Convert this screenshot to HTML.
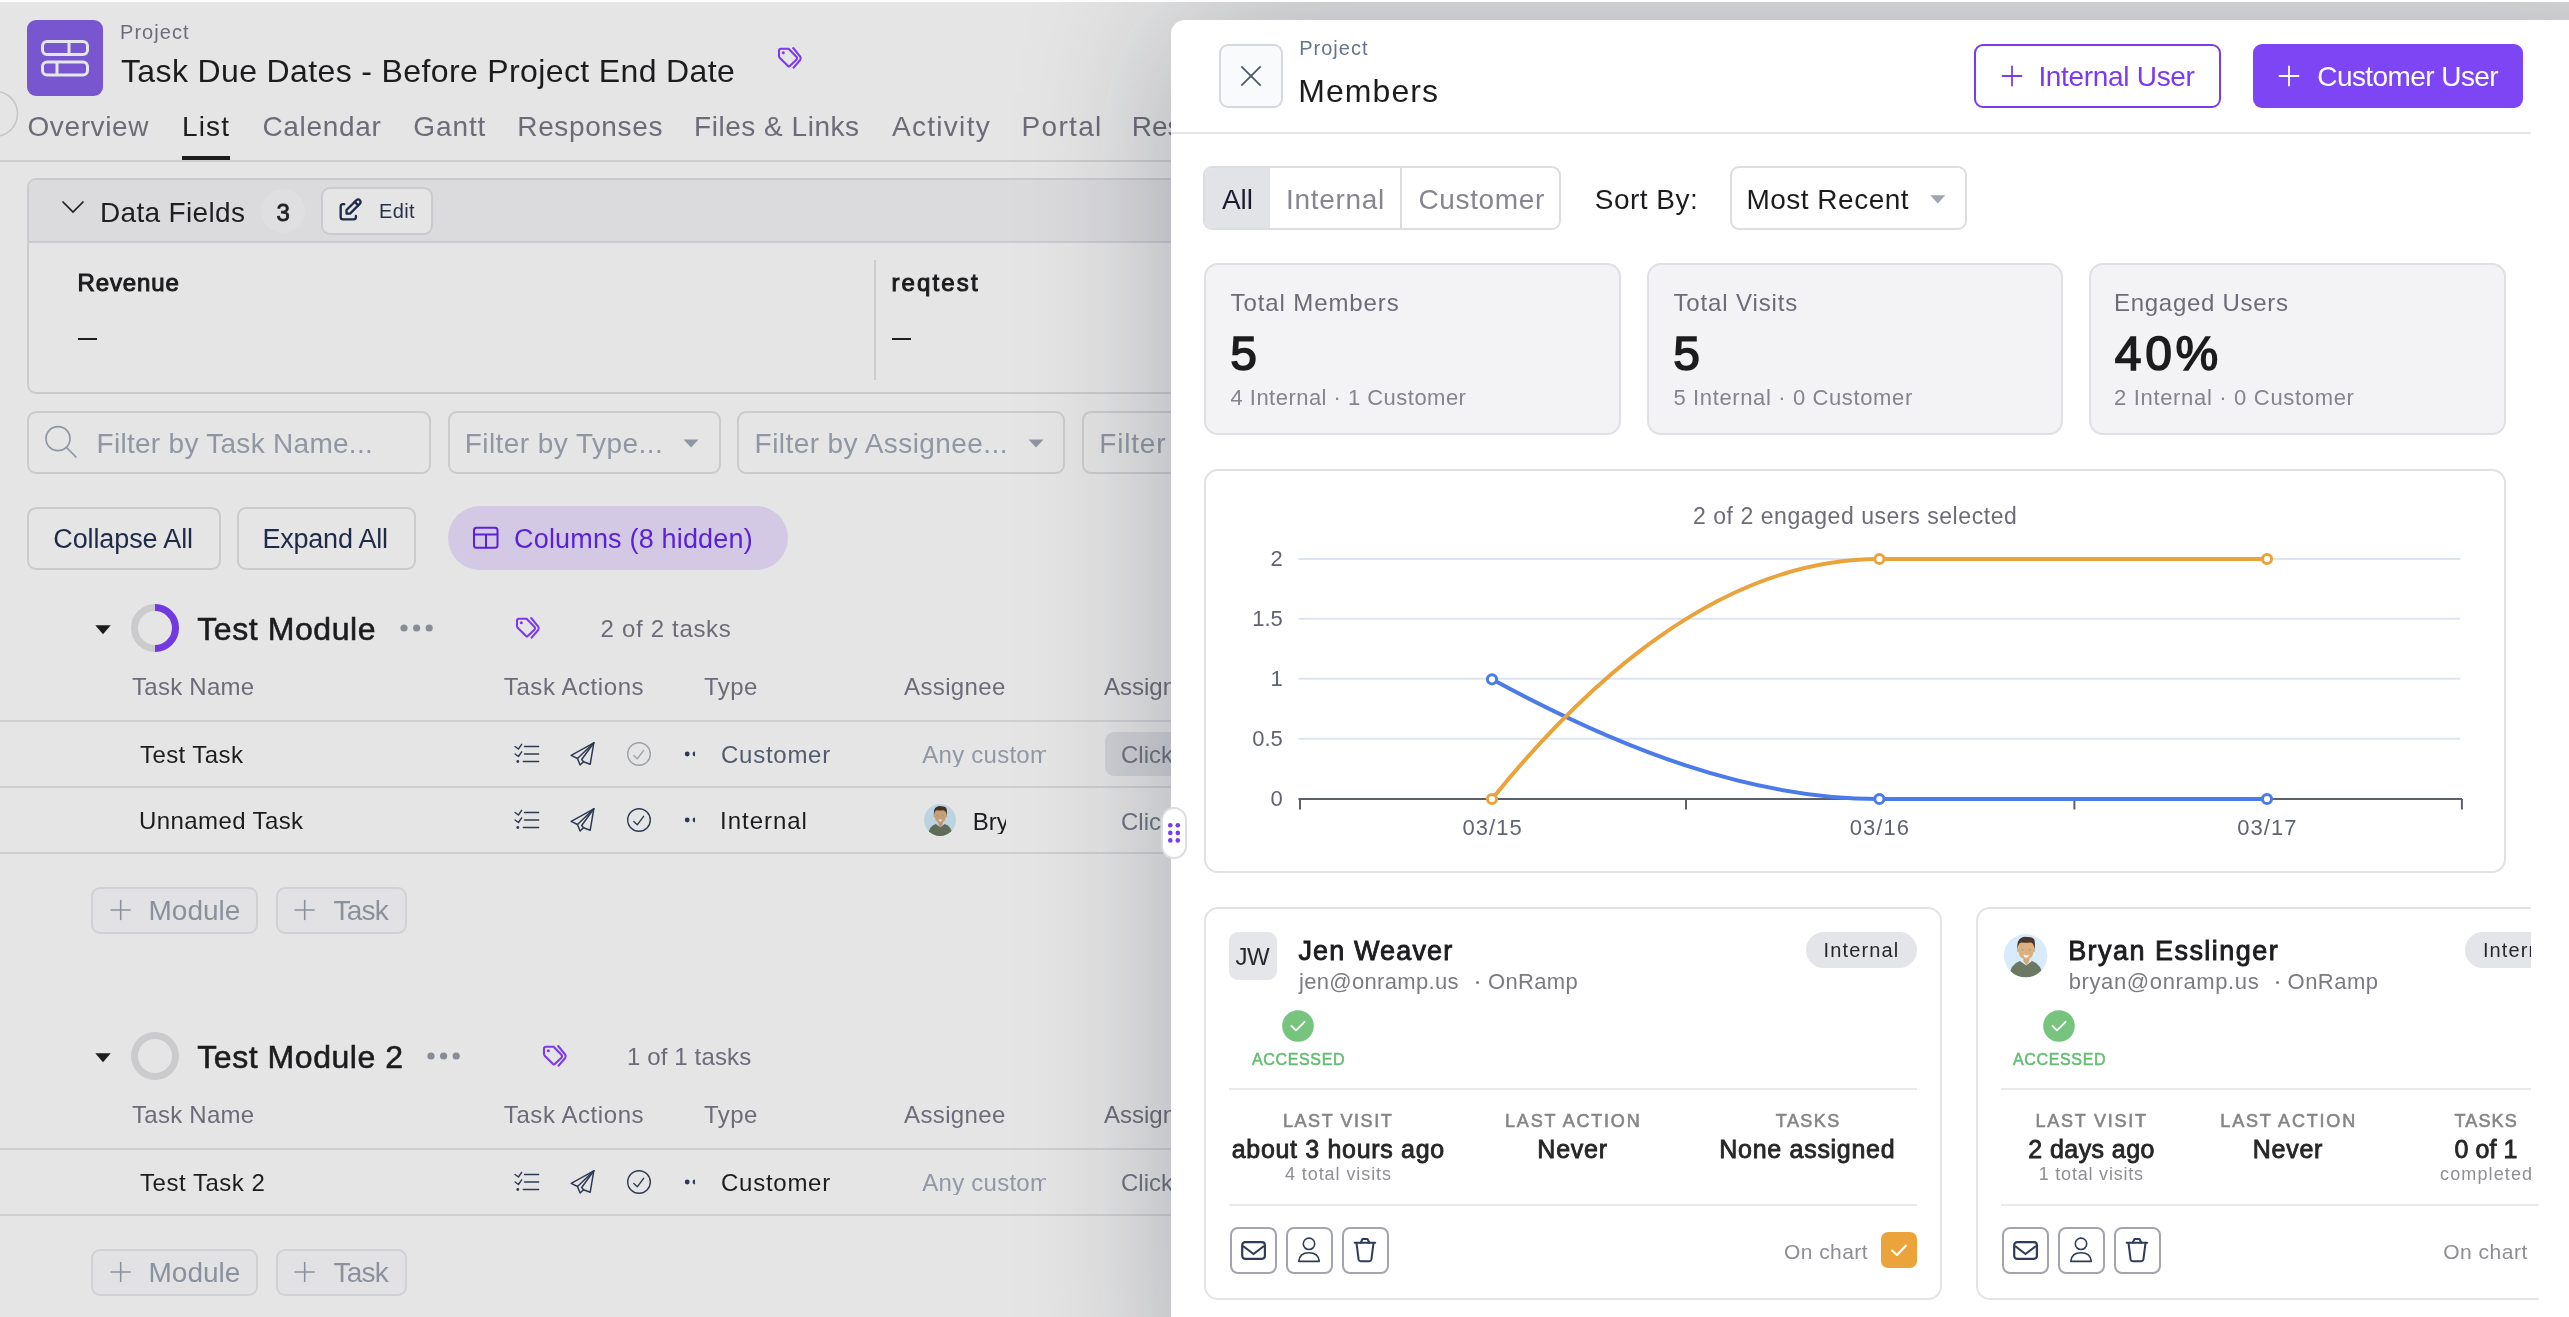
<!DOCTYPE html>
<html><head><meta charset="utf-8"><title>Members</title>
<style>
html,body{margin:0;padding:0;}
body{width:2569px;height:1317px;overflow:hidden;position:relative;background:#e5e5e5;font-family:"Liberation Sans",sans-serif;}
*{-webkit-font-smoothing:antialiased;}

</style></head><body>
<div style="position:absolute;left:0;top:0;width:2569px;height:1317px;overflow:hidden;will-change:transform">
<div style="position:absolute;left:0;top:0;width:1171px;height:1317px;overflow:hidden">
<svg style="position:absolute;left:-30px;top:85px;overflow:visible;" width="60" height="60" viewBox="0 0 60 60" fill="none"><circle cx="25" cy="28.8" r="22.5" stroke="#c6c6c9" stroke-width="1.6"/></svg>
<div style="position:absolute;left:27px;top:20px;width:76px;height:76px;border-radius:9px;background:#7756d0;"></div>
<svg style="position:absolute;left:27px;top:20px;overflow:visible;" width="76" height="76" viewBox="0 0 76 76" fill="none"><rect x="15.5" y="21.5" width="45" height="13" rx="4.5" stroke="#e6e6e6" stroke-width="3"/><rect x="15.5" y="42" width="45" height="13" rx="4.5" stroke="#e6e6e6" stroke-width="3"/><line x1="42" y1="21.5" x2="42" y2="34.5" stroke="#e6e6e6" stroke-width="3"/><line x1="30" y1="42" x2="30" y2="55" stroke="#e6e6e6" stroke-width="3"/></svg>
<div style="position:absolute;left:120.00px;top:22px;font-size:20px;line-height:20px;font-weight:400;color:#6e6c79;letter-spacing:1.052px;white-space:nowrap;">Project</div>
<div style="position:absolute;left:121.00px;top:55px;font-size:32px;line-height:32px;font-weight:400;color:#1c1c1f;letter-spacing:0.369px;white-space:nowrap;">Task Due Dates - Before Project End Date</div>
<svg style="position:absolute;left:770px;top:40px;overflow:visible;" width="40" height="35" viewBox="0 0 40 35" fill="none"><g stroke="#7c3aed" stroke-width="2.1" stroke-linecap="round" stroke-linejoin="round" fill="none"><path d="M11 8.7 H18.6 L26.6 17 Q27.6 18.3 26.6 19.5 L19.8 26.1 Q18.9 27 18 26.1 L9.7 17.7 Q9 17 9 16 V10.7 Q9 8.7 11 8.7 Z"/><path d="M23.2 8 L30.2 16.6 Q31.3 18.3 30.2 20 L23.6 27.6"/></g><circle cx="13.3" cy="12.8" r="1.5" fill="#7c3aed"/></svg>
<div style="position:absolute;left:27.40px;top:113px;font-size:28px;line-height:28px;font-weight:400;color:#6d6b78;letter-spacing:0.633px;white-space:nowrap;">Overview</div>
<div style="position:absolute;left:182.00px;top:113px;font-size:28px;line-height:28px;font-weight:400;color:#1c1c1f;letter-spacing:1.136px;white-space:nowrap;">List</div>
<div style="position:absolute;left:262.40px;top:113px;font-size:28px;line-height:28px;font-weight:400;color:#6d6b78;letter-spacing:0.685px;white-space:nowrap;">Calendar</div>
<div style="position:absolute;left:413.20px;top:113px;font-size:28px;line-height:28px;font-weight:400;color:#6d6b78;letter-spacing:0.924px;white-space:nowrap;">Gantt</div>
<div style="position:absolute;left:517.30px;top:113px;font-size:28px;line-height:28px;font-weight:400;color:#6d6b78;letter-spacing:0.627px;white-space:nowrap;">Responses</div>
<div style="position:absolute;left:694.00px;top:113px;font-size:28px;line-height:28px;font-weight:400;color:#6d6b78;letter-spacing:0.532px;white-space:nowrap;">Files &amp; Links</div>
<div style="position:absolute;left:892.00px;top:113px;font-size:28px;line-height:28px;font-weight:400;color:#6d6b78;letter-spacing:1.289px;white-space:nowrap;">Activity</div>
<div style="position:absolute;left:1021.60px;top:113px;font-size:28px;line-height:28px;font-weight:400;color:#6d6b78;letter-spacing:1.295px;white-space:nowrap;">Portal</div>
<div style="position:absolute;left:1131.80px;top:113px;font-size:28px;line-height:28px;font-weight:400;color:#6d6b78;letter-spacing:0.000px;white-space:nowrap;">Resources</div>
<div style="position:absolute;left:0px;top:160px;width:1171px;height:2px;border-radius:0px;background:#cdcdd0;"></div>
<div style="position:absolute;left:182px;top:156px;width:48px;height:4px;border-radius:0px;background:#1c1c1f;"></div>
<div style="position:absolute;left:27px;top:178px;width:1300px;height:216px;border-radius:9px;background:#e5e5e5;border:2px solid #cbcbcf;box-sizing:border-box;"></div>
<div style="position:absolute;left:29px;top:180px;width:1300px;height:62px;border-radius:0px;background:#dbdbde;border-top-left-radius:7px;"></div>
<div style="position:absolute;left:27px;top:241px;width:1300px;height:2px;border-radius:0px;background:#cbcbcf;"></div>
<svg style="position:absolute;left:60px;top:198px;overflow:visible;" width="26" height="18" viewBox="0 0 26 18" fill="none"><polyline points="2.5,3.5 13,14 23.5,3.5" stroke="#1f1f22" stroke-width="1.7" fill="none"/></svg>
<div style="position:absolute;left:100.00px;top:199px;font-size:28px;line-height:28px;font-weight:400;color:#1f1f22;letter-spacing:0.339px;white-space:nowrap;">Data Fields</div>
<div style="position:absolute;left:261px;top:189px;width:44px;height:44px;border-radius:22px;background:#dfdfe1;"></div>
<div style="position:absolute;left:276.39px;top:201px;font-size:24px;line-height:24px;font-weight:400;color:#1f1f22;letter-spacing:0.000px;white-space:nowrap;-webkit-text-stroke:0.79px #1f1f22;">3</div>
<div style="position:absolute;left:321px;top:187px;width:112px;height:48px;border-radius:9px;background:#e5e5e5;border:2px solid #cbcbcf;box-sizing:border-box;"></div>
<svg style="position:absolute;left:337px;top:197px;overflow:visible;" width="28" height="28" viewBox="0 0 28 28" fill="none"><g stroke="#1e2a4a" stroke-width="2" stroke-linecap="round" stroke-linejoin="round" transform="translate(-1,-1) scale(1.17)"><path d="M7 7h-1a2 2 0 0 0 -2 2v9a2 2 0 0 0 2 2h9a2 2 0 0 0 2 -2v-1"/><path d="M20.385 6.585a2.1 2.1 0 0 0 -2.97 -2.97l-8.415 8.385v3h3l8.385 -8.415z"/><path d="M16 5l3 3"/></g></svg>
<div style="position:absolute;left:379.00px;top:201px;font-size:20px;line-height:20px;font-weight:400;color:#27314d;letter-spacing:0.365px;white-space:nowrap;">Edit</div>
<div style="position:absolute;left:77.50px;top:271px;font-size:24px;line-height:24px;font-weight:400;color:#1c1c1f;letter-spacing:0.880px;white-space:nowrap;-webkit-text-stroke:1.0px #1c1c1f;">Revenue</div>
<div style="position:absolute;left:78px;top:338px;width:19px;height:2px;border-radius:0px;background:#1f1f22;"></div>
<div style="position:absolute;left:874px;top:260px;width:2px;height:120px;border-radius:0px;background:#cdcdd0;"></div>
<div style="position:absolute;left:891.50px;top:271px;font-size:24px;line-height:24px;font-weight:400;color:#1c1c1f;letter-spacing:2.116px;white-space:nowrap;-webkit-text-stroke:1.0px #1c1c1f;">reqtest</div>
<div style="position:absolute;left:892px;top:338px;width:19px;height:2px;border-radius:0px;background:#1f1f22;"></div>
<div style="position:absolute;left:27px;top:410.5px;width:403.5px;height:63px;border-radius:9px;background:transparent;border:2px solid #cbcbcf;box-sizing:border-box;"></div>
<div style="position:absolute;left:447.5px;top:410.5px;width:273.20000000000005px;height:63px;border-radius:9px;background:transparent;border:2px solid #cbcbcf;box-sizing:border-box;"></div>
<div style="position:absolute;left:737.3px;top:410.5px;width:327.70000000000005px;height:63px;border-radius:9px;background:transparent;border:2px solid #cbcbcf;box-sizing:border-box;"></div>
<div style="position:absolute;left:1082px;top:410.5px;width:318px;height:63px;border-radius:9px;background:transparent;border:2px solid #cbcbcf;box-sizing:border-box;"></div>
<svg style="position:absolute;left:40px;top:424px;overflow:visible;" width="40" height="40" viewBox="0 0 40 40" fill="none"><circle cx="18" cy="14.7" r="12" stroke="#8f96a3" stroke-width="1.7"/><line x1="26.5" y1="23.5" x2="36" y2="33" stroke="#8f96a3" stroke-width="1.7" stroke-linecap="round"/></svg>
<div style="position:absolute;left:96.50px;top:430px;font-size:28px;line-height:28px;font-weight:400;color:#9097a3;letter-spacing:0.288px;white-space:nowrap;">Filter by Task Name...</div>
<div style="position:absolute;left:464.70px;top:430px;font-size:28px;line-height:28px;font-weight:400;color:#9097a3;letter-spacing:0.449px;white-space:nowrap;">Filter by Type...</div>
<div style="position:absolute;left:754.60px;top:430px;font-size:28px;line-height:28px;font-weight:400;color:#9097a3;letter-spacing:0.430px;white-space:nowrap;">Filter by Assignee...</div>
<div style="position:absolute;left:1099.30px;top:430px;font-size:28px;line-height:28px;font-weight:400;color:#9097a3;letter-spacing:0.801px;white-space:nowrap;">Filter</div>
<svg style="position:absolute;left:682.5px;top:439px;overflow:visible;" width="16" height="9" viewBox="0 0 16 9" fill="none"><path d="M0.5 0.5 H15.5 L8 8.5 Z" fill="#8f96a3"/></svg>
<svg style="position:absolute;left:1027.5px;top:439px;overflow:visible;" width="16" height="9" viewBox="0 0 16 9" fill="none"><path d="M0.5 0.5 H15.5 L8 8.5 Z" fill="#8f96a3"/></svg>
<div style="position:absolute;left:27px;top:507px;width:193.5px;height:63px;border-radius:9px;background:transparent;border:2px solid #cbcbcf;box-sizing:border-box;"></div>
<div style="position:absolute;left:53.30px;top:526.4px;font-size:27px;line-height:27px;font-weight:400;color:#1f2a48;letter-spacing:-0.115px;white-space:nowrap;">Collapse All</div>
<div style="position:absolute;left:237.4px;top:507px;width:178.2px;height:63px;border-radius:9px;background:transparent;border:2px solid #cbcbcf;box-sizing:border-box;"></div>
<div style="position:absolute;left:262.40px;top:526.4px;font-size:27px;line-height:27px;font-weight:400;color:#1f2a48;letter-spacing:-0.209px;white-space:nowrap;">Expand All</div>
<div style="position:absolute;left:448px;top:506px;width:340px;height:64px;border-radius:32px;background:#d3c9e4;"></div>
<svg style="position:absolute;left:472px;top:526px;overflow:visible;" width="28" height="24" viewBox="0 0 28 24" fill="none"><rect x="2" y="1.8" width="23.5" height="20" rx="2.5" stroke="#5b21d6" stroke-width="2"/><line x1="2" y1="8.5" x2="25.5" y2="8.5" stroke="#5b21d6" stroke-width="2"/><line x1="14" y1="8.5" x2="14" y2="21.8" stroke="#5b21d6" stroke-width="2"/></svg>
<div style="position:absolute;left:514.00px;top:526px;font-size:27px;line-height:27px;font-weight:400;color:#5b21d6;letter-spacing:0.181px;white-space:nowrap;">Columns (8 hidden)</div>
<svg style="position:absolute;left:95px;top:625px;overflow:visible;" width="16" height="10" viewBox="0 0 16 10" fill="none"><path d="M0.3 0.3 H15.7 L8 9.3 Z" fill="#1c1c1f"/></svg>
<svg style="position:absolute;left:131px;top:604px;overflow:visible;" width="48" height="48" viewBox="0 0 48 48" fill="none"><circle cx="24" cy="24" r="20.5" stroke="#cbcbce" stroke-width="7"/><path d="M24 3.5 A20.5 20.5 0 0 1 24 44.5" stroke="#7239e0" stroke-width="7" fill="none"/></svg>
<div style="position:absolute;left:197.30px;top:613px;font-size:32px;line-height:32px;font-weight:400;color:#1c1c1f;letter-spacing:0.567px;white-space:nowrap;-webkit-text-stroke:0.6px #1c1c1f;">Test Module</div>
<svg style="position:absolute;left:399.5px;top:624px;overflow:visible;" width="40" height="8" viewBox="0 0 40 8" fill="none"><circle cx="4.0" cy="4" r="3.6" fill="#878c96"/><circle cx="16.6" cy="4" r="3.6" fill="#878c96"/><circle cx="29.2" cy="4" r="3.6" fill="#878c96"/></svg>
<svg style="position:absolute;left:507.7px;top:609.5px;overflow:visible;" width="40" height="35" viewBox="0 0 40 35" fill="none"><g stroke="#7c3aed" stroke-width="2.1" stroke-linecap="round" stroke-linejoin="round" fill="none"><path d="M11 8.7 H18.6 L26.6 17 Q27.6 18.3 26.6 19.5 L19.8 26.1 Q18.9 27 18 26.1 L9.7 17.7 Q9 17 9 16 V10.7 Q9 8.7 11 8.7 Z"/><path d="M23.2 8 L30.2 16.6 Q31.3 18.3 30.2 20 L23.6 27.6"/></g><circle cx="13.3" cy="12.8" r="1.5" fill="#7c3aed"/></svg>
<div style="position:absolute;left:600.50px;top:617px;font-size:24px;line-height:24px;font-weight:400;color:#6d6b78;letter-spacing:0.688px;white-space:nowrap;">2 of 2 tasks</div>
<div style="position:absolute;left:132.00px;top:675px;font-size:24px;line-height:24px;font-weight:400;color:#6d6b78;letter-spacing:0.264px;white-space:nowrap;">Task Name</div>
<div style="position:absolute;left:503.80px;top:675px;font-size:24px;line-height:24px;font-weight:400;color:#6d6b78;letter-spacing:0.580px;white-space:nowrap;">Task Actions</div>
<div style="position:absolute;left:704.00px;top:675px;font-size:24px;line-height:24px;font-weight:400;color:#6d6b78;letter-spacing:0.439px;white-space:nowrap;">Type</div>
<div style="position:absolute;left:904.00px;top:675px;font-size:24px;line-height:24px;font-weight:400;color:#6d6b78;letter-spacing:0.374px;white-space:nowrap;">Assignee</div>
<div style="position:absolute;left:1104.00px;top:675px;font-size:24px;line-height:24px;font-weight:400;color:#6d6b78;letter-spacing:0.000px;white-space:nowrap;">Assignee Type</div>
<div style="position:absolute;left:0px;top:720px;width:1171px;height:2px;border-radius:0px;background:#cfcfd2;"></div>
<div style="position:absolute;left:140.00px;top:743.2px;font-size:24px;line-height:24px;font-weight:400;color:#1c1c1f;letter-spacing:0.421px;white-space:nowrap;">Test Task</div>
<svg style="position:absolute;left:512px;top:742px;overflow:visible;" width="30" height="24" viewBox="0 0 30 24" fill="none"><g stroke="#2f3a52" stroke-width="1.4" stroke-linecap="round" stroke-linejoin="round" fill="none"><polyline points="3.1,4.5 6.4,7 9.7,2.3"/><polyline points="3.1,12 6.4,14.5 9.7,9.8"/><line x1="12.5" y1="4.5" x2="26.6" y2="4.5"/><line x1="12.5" y1="12" x2="26.6" y2="12"/><line x1="11.3" y1="19.5" x2="26.6" y2="19.5"/></g><circle cx="5.8" cy="19.5" r="1.4" fill="#2f3a52"/></svg>
<svg style="position:absolute;left:569px;top:741px;overflow:visible;" width="28" height="26" viewBox="0 0 28 26" fill="none"><g stroke="#2f3a52" stroke-width="1.5" stroke-linejoin="round" stroke-linecap="round" fill="none"><path d="M24.8 1.8 L2.2 14.4 L8.5 17.5 L11.1 24 L14.5 20.7 L21.2 23.2 Z"/><path d="M24.8 1.8 L8.5 17.5"/><path d="M24.8 1.8 L12.7 18.5 L14.5 20.7"/></g></svg>
<svg style="position:absolute;left:625px;top:740px;overflow:visible;" width="28" height="28" viewBox="0 0 28 28" fill="none"><circle cx="14" cy="14" r="11.3" stroke="#9ba0aa" stroke-width="1.4"/><polyline points="8.8,15.5 12.3,18.8 18.6,10.3" stroke="#9ba0aa" stroke-width="1.4" fill="none" stroke-linecap="round" stroke-linejoin="round"/></svg>
<svg style="position:absolute;left:683px;top:750px;overflow:visible;" width="14" height="8" viewBox="0 0 14 8" fill="none"><circle cx="4.2" cy="4" r="2.4" fill="#2f3a52"/><path d="M12 1.6 A2.4 2.4 0 0 0 12 6.4 Z" fill="#2f3a52"/></svg>
<div style="position:absolute;left:721.00px;top:743px;font-size:24px;line-height:24px;font-weight:400;color:#525b6c;letter-spacing:0.738px;white-space:nowrap;">Customer</div>
<div style="position:absolute;left:922.30px;top:743px;font-size:24px;line-height:24px;font-weight:400;color:#9198a4;letter-spacing:0.250px;white-space:nowrap;width:124.20px;overflow:hidden;">Any custom</div>
<div style="position:absolute;left:1105px;top:732px;width:200px;height:44px;border-radius:9px;background:#d1d2d6;"></div>
<div style="position:absolute;left:1121.00px;top:743px;font-size:24px;line-height:24px;font-weight:400;color:#6f7480;letter-spacing:0.000px;white-space:nowrap;">Click to add</div>
<div style="position:absolute;left:0px;top:786px;width:1171px;height:2px;border-radius:0px;background:#cfcfd2;"></div>
<div style="position:absolute;left:139.00px;top:809.2px;font-size:24px;line-height:24px;font-weight:400;color:#1c1c1f;letter-spacing:0.402px;white-space:nowrap;">Unnamed Task</div>
<svg style="position:absolute;left:512px;top:808px;overflow:visible;" width="30" height="24" viewBox="0 0 30 24" fill="none"><g stroke="#2f3a52" stroke-width="1.4" stroke-linecap="round" stroke-linejoin="round" fill="none"><polyline points="3.1,4.5 6.4,7 9.7,2.3"/><polyline points="3.1,12 6.4,14.5 9.7,9.8"/><line x1="12.5" y1="4.5" x2="26.6" y2="4.5"/><line x1="12.5" y1="12" x2="26.6" y2="12"/><line x1="11.3" y1="19.5" x2="26.6" y2="19.5"/></g><circle cx="5.8" cy="19.5" r="1.4" fill="#2f3a52"/></svg>
<svg style="position:absolute;left:569px;top:807px;overflow:visible;" width="28" height="26" viewBox="0 0 28 26" fill="none"><g stroke="#2f3a52" stroke-width="1.5" stroke-linejoin="round" stroke-linecap="round" fill="none"><path d="M24.8 1.8 L2.2 14.4 L8.5 17.5 L11.1 24 L14.5 20.7 L21.2 23.2 Z"/><path d="M24.8 1.8 L8.5 17.5"/><path d="M24.8 1.8 L12.7 18.5 L14.5 20.7"/></g></svg>
<svg style="position:absolute;left:625px;top:806px;overflow:visible;" width="28" height="28" viewBox="0 0 28 28" fill="none"><circle cx="14" cy="14" r="11.3" stroke="#2f3a52" stroke-width="1.4"/><polyline points="8.8,15.5 12.3,18.8 18.6,10.3" stroke="#2f3a52" stroke-width="1.4" fill="none" stroke-linecap="round" stroke-linejoin="round"/></svg>
<svg style="position:absolute;left:683px;top:816px;overflow:visible;" width="14" height="8" viewBox="0 0 14 8" fill="none"><circle cx="4.2" cy="4" r="2.4" fill="#2f3a52"/><path d="M12 1.6 A2.4 2.4 0 0 0 12 6.4 Z" fill="#2f3a52"/></svg>
<div style="position:absolute;left:720.00px;top:809px;font-size:24px;line-height:24px;font-weight:400;color:#1c1c1f;letter-spacing:0.983px;white-space:nowrap;">Internal</div>
<svg style="position:absolute;left:923.5px;top:804px;overflow:visible;" width="32" height="32" viewBox="0 0 32 32" fill="none"><defs><clipPath id="avL01"><circle cx="21.65" cy="21.65" r="21.65"/></clipPath></defs><g transform="scale(0.7390300230946882)" clip-path="url(#avL01)"><rect width="44" height="44" fill="#bcd3e2"/><path d="M5 44 Q6 30 16 27 L22.2 31.5 L28 27 Q38 30 39 44 Z" fill="#606c58"/><path d="M19.4 23.5 L25.3 23.5 L25.3 27 L22.2 31.6 L19.4 27 Z" fill="#bf956a"/><ellipse cx="14.3" cy="16.3" rx="1.3" ry="2" fill="#c39c70"/><ellipse cx="29.8" cy="16.3" rx="1.3" ry="2" fill="#c39c70"/><path d="M14.4 12 Q14.2 7.5 22 7.5 Q29.8 7.5 29.6 12 L29.6 17 Q29.3 22 26.5 24 Q22.2 26.6 17.8 24 Q14.8 22 14.4 17 Z" fill="#c79f72"/><path d="M13.4 15.5 Q12.6 6 17 4 Q20 2.3 23 3 Q28 2.5 30 5 Q31.6 8 30.6 15.5 L29.6 11.5 Q29 8.6 26 8.4 Q22 9.3 17.5 8.4 Q14.9 8.8 14.4 11.5 Z" fill="#443123"/><circle cx="18.3" cy="15.8" r="1" fill="#8e9594"/><circle cx="25.6" cy="15.8" r="1" fill="#8e9594"/><path d="M19.3 20.8 Q22.1 22.1 24.8 20.8 Q24.2 23.7 22.1 23.7 Q20 23.7 19.3 20.8 Z" fill="#e6e6e6"/></g></svg>
<div style="position:absolute;left:972.70px;top:809.6px;font-size:24px;line-height:24px;font-weight:400;color:#1c1c1f;letter-spacing:0.000px;white-space:nowrap;width:33.30px;overflow:hidden;">Bryan Esslinger</div>
<div style="position:absolute;left:1121.00px;top:809.6px;font-size:24px;line-height:24px;font-weight:400;color:#6f7480;letter-spacing:0.000px;white-space:nowrap;">Click to add</div>
<div style="position:absolute;left:0px;top:852px;width:1171px;height:2px;border-radius:0px;background:#cfcfd2;"></div>
<div style="position:absolute;left:91.4px;top:886.5px;width:166.99999999999997px;height:47px;border-radius:9px;background:#e2e2e4;border:2px solid #d0d1d5;box-sizing:border-box;"></div>
<svg style="position:absolute;left:111.3px;top:900.0px;overflow:visible;" width="20" height="20" viewBox="0 0 20 20" fill="none"><g stroke="#8a919d" stroke-width="1.6" stroke-linecap="round"><line x1="9.7" y1="0.5" x2="9.7" y2="19.5"/><line x1="0.2" y1="10" x2="19.2" y2="10"/></g></svg>
<div style="position:absolute;left:148.50px;top:896.5px;font-size:28px;line-height:28px;font-weight:400;color:#8a919d;letter-spacing:0.008px;white-space:nowrap;">Module</div>
<div style="position:absolute;left:275.5px;top:886.5px;width:131.89999999999998px;height:47px;border-radius:9px;background:#e2e2e4;border:2px solid #d0d1d5;box-sizing:border-box;"></div>
<svg style="position:absolute;left:295.3px;top:900.0px;overflow:visible;" width="20" height="20" viewBox="0 0 20 20" fill="none"><g stroke="#8a919d" stroke-width="1.6" stroke-linecap="round"><line x1="9.7" y1="0.5" x2="9.7" y2="19.5"/><line x1="0.2" y1="10" x2="19.2" y2="10"/></g></svg>
<div style="position:absolute;left:333.60px;top:896.5px;font-size:28px;line-height:28px;font-weight:400;color:#8a919d;letter-spacing:-0.824px;white-space:nowrap;">Task</div>
<svg style="position:absolute;left:95px;top:1053px;overflow:visible;" width="16" height="10" viewBox="0 0 16 10" fill="none"><path d="M0.3 0.3 H15.7 L8 9.3 Z" fill="#1c1c1f"/></svg>
<svg style="position:absolute;left:131px;top:1032px;overflow:visible;" width="48" height="48" viewBox="0 0 48 48" fill="none"><circle cx="24" cy="24" r="20.5" stroke="#cbcbce" stroke-width="7"/></svg>
<div style="position:absolute;left:197.30px;top:1041px;font-size:32px;line-height:32px;font-weight:400;color:#1c1c1f;letter-spacing:0.548px;white-space:nowrap;-webkit-text-stroke:0.6px #1c1c1f;">Test Module 2</div>
<svg style="position:absolute;left:427.1px;top:1052px;overflow:visible;" width="40" height="8" viewBox="0 0 40 8" fill="none"><circle cx="4.0" cy="4" r="3.6" fill="#878c96"/><circle cx="16.6" cy="4" r="3.6" fill="#878c96"/><circle cx="29.2" cy="4" r="3.6" fill="#878c96"/></svg>
<svg style="position:absolute;left:534.5px;top:1037.5px;overflow:visible;" width="40" height="35" viewBox="0 0 40 35" fill="none"><g stroke="#7c3aed" stroke-width="2.1" stroke-linecap="round" stroke-linejoin="round" fill="none"><path d="M11 8.7 H18.6 L26.6 17 Q27.6 18.3 26.6 19.5 L19.8 26.1 Q18.9 27 18 26.1 L9.7 17.7 Q9 17 9 16 V10.7 Q9 8.7 11 8.7 Z"/><path d="M23.2 8 L30.2 16.6 Q31.3 18.3 30.2 20 L23.6 27.6"/></g><circle cx="13.3" cy="12.8" r="1.5" fill="#7c3aed"/></svg>
<div style="position:absolute;left:626.90px;top:1045px;font-size:24px;line-height:24px;font-weight:400;color:#6d6b78;letter-spacing:0.143px;white-space:nowrap;">1 of 1 tasks</div>
<div style="position:absolute;left:132.00px;top:1103px;font-size:24px;line-height:24px;font-weight:400;color:#6d6b78;letter-spacing:0.264px;white-space:nowrap;">Task Name</div>
<div style="position:absolute;left:503.80px;top:1103px;font-size:24px;line-height:24px;font-weight:400;color:#6d6b78;letter-spacing:0.580px;white-space:nowrap;">Task Actions</div>
<div style="position:absolute;left:704.00px;top:1103px;font-size:24px;line-height:24px;font-weight:400;color:#6d6b78;letter-spacing:0.439px;white-space:nowrap;">Type</div>
<div style="position:absolute;left:904.00px;top:1103px;font-size:24px;line-height:24px;font-weight:400;color:#6d6b78;letter-spacing:0.374px;white-space:nowrap;">Assignee</div>
<div style="position:absolute;left:1104.00px;top:1103px;font-size:24px;line-height:24px;font-weight:400;color:#6d6b78;letter-spacing:0.000px;white-space:nowrap;">Assignee Type</div>
<div style="position:absolute;left:0px;top:1148px;width:1171px;height:2px;border-radius:0px;background:#cfcfd2;"></div>
<div style="position:absolute;left:140.00px;top:1171.2px;font-size:24px;line-height:24px;font-weight:400;color:#1c1c1f;letter-spacing:0.530px;white-space:nowrap;">Test Task 2</div>
<svg style="position:absolute;left:512px;top:1170px;overflow:visible;" width="30" height="24" viewBox="0 0 30 24" fill="none"><g stroke="#2f3a52" stroke-width="1.4" stroke-linecap="round" stroke-linejoin="round" fill="none"><polyline points="3.1,4.5 6.4,7 9.7,2.3"/><polyline points="3.1,12 6.4,14.5 9.7,9.8"/><line x1="12.5" y1="4.5" x2="26.6" y2="4.5"/><line x1="12.5" y1="12" x2="26.6" y2="12"/><line x1="11.3" y1="19.5" x2="26.6" y2="19.5"/></g><circle cx="5.8" cy="19.5" r="1.4" fill="#2f3a52"/></svg>
<svg style="position:absolute;left:569px;top:1169px;overflow:visible;" width="28" height="26" viewBox="0 0 28 26" fill="none"><g stroke="#2f3a52" stroke-width="1.5" stroke-linejoin="round" stroke-linecap="round" fill="none"><path d="M24.8 1.8 L2.2 14.4 L8.5 17.5 L11.1 24 L14.5 20.7 L21.2 23.2 Z"/><path d="M24.8 1.8 L8.5 17.5"/><path d="M24.8 1.8 L12.7 18.5 L14.5 20.7"/></g></svg>
<svg style="position:absolute;left:625px;top:1168px;overflow:visible;" width="28" height="28" viewBox="0 0 28 28" fill="none"><circle cx="14" cy="14" r="11.3" stroke="#2f3a52" stroke-width="1.4"/><polyline points="8.8,15.5 12.3,18.8 18.6,10.3" stroke="#2f3a52" stroke-width="1.4" fill="none" stroke-linecap="round" stroke-linejoin="round"/></svg>
<svg style="position:absolute;left:683px;top:1178px;overflow:visible;" width="14" height="8" viewBox="0 0 14 8" fill="none"><circle cx="4.2" cy="4" r="2.4" fill="#2f3a52"/><path d="M12 1.6 A2.4 2.4 0 0 0 12 6.4 Z" fill="#2f3a52"/></svg>
<div style="position:absolute;left:721.00px;top:1171px;font-size:24px;line-height:24px;font-weight:400;color:#1c1c1f;letter-spacing:0.738px;white-space:nowrap;">Customer</div>
<div style="position:absolute;left:922.30px;top:1171px;font-size:24px;line-height:24px;font-weight:400;color:#9198a4;letter-spacing:0.250px;white-space:nowrap;width:124.20px;overflow:hidden;">Any custom</div>
<div style="position:absolute;left:1121.00px;top:1171px;font-size:24px;line-height:24px;font-weight:400;color:#6f7480;letter-spacing:0.000px;white-space:nowrap;">Click to add</div>
<div style="position:absolute;left:0px;top:1214px;width:1171px;height:2px;border-radius:0px;background:#cfcfd2;"></div>
<div style="position:absolute;left:91.4px;top:1248.5px;width:166.99999999999997px;height:47px;border-radius:9px;background:#e2e2e4;border:2px solid #d0d1d5;box-sizing:border-box;"></div>
<svg style="position:absolute;left:111.3px;top:1262.0px;overflow:visible;" width="20" height="20" viewBox="0 0 20 20" fill="none"><g stroke="#8a919d" stroke-width="1.6" stroke-linecap="round"><line x1="9.7" y1="0.5" x2="9.7" y2="19.5"/><line x1="0.2" y1="10" x2="19.2" y2="10"/></g></svg>
<div style="position:absolute;left:148.50px;top:1258.5px;font-size:28px;line-height:28px;font-weight:400;color:#8a919d;letter-spacing:0.008px;white-space:nowrap;">Module</div>
<div style="position:absolute;left:275.5px;top:1248.5px;width:131.89999999999998px;height:47px;border-radius:9px;background:#e2e2e4;border:2px solid #d0d1d5;box-sizing:border-box;"></div>
<svg style="position:absolute;left:295.3px;top:1262.0px;overflow:visible;" width="20" height="20" viewBox="0 0 20 20" fill="none"><g stroke="#8a919d" stroke-width="1.6" stroke-linecap="round"><line x1="9.7" y1="0.5" x2="9.7" y2="19.5"/><line x1="0.2" y1="10" x2="19.2" y2="10"/></g></svg>
<div style="position:absolute;left:333.60px;top:1258.5px;font-size:28px;line-height:28px;font-weight:400;color:#8a919d;letter-spacing:-0.824px;white-space:nowrap;">Task</div>
</div>
<div style="position:absolute;left:1171px;top:20px;width:1500px;height:1400px;background:#fff;border-top-left-radius:14px;box-shadow:0 0 150px rgba(15,23,42,0.27);"></div>
<div style="position:absolute;left:0;top:0;width:2569px;height:2px;background:#fdfdfd"></div>
<div style="position:absolute;left:1161px;top:807px;width:26px;height:52px;border-radius:13px;background:#fff;border:2px solid #dcdde1;box-sizing:border-box;"></div>
<svg style="position:absolute;left:1161px;top:807px;overflow:visible;" width="26" height="52" viewBox="0 0 26 52" fill="none"><circle cx="9.3" cy="18.3" r="2.3" fill="#7c3aed"/><circle cx="9.3" cy="25.9" r="2.3" fill="#7c3aed"/><circle cx="9.3" cy="33.4" r="2.3" fill="#7c3aed"/><circle cx="16.8" cy="18.3" r="2.3" fill="#7c3aed"/><circle cx="16.8" cy="25.9" r="2.3" fill="#7c3aed"/><circle cx="16.8" cy="33.4" r="2.3" fill="#7c3aed"/></svg>
<div style="position:absolute;left:1219px;top:44px;width:64px;height:64px;border-radius:9px;background:#f9fafb;border:2px solid #d5d8de;box-sizing:border-box;"></div>
<svg style="position:absolute;left:1239px;top:64px;overflow:visible;" width="24" height="24" viewBox="0 0 24 24" fill="none"><g stroke="#4b5568" stroke-width="1.7"><line x1="2.3" y1="2.3" x2="21.7" y2="21.7"/><line x1="21.7" y1="2.3" x2="2.3" y2="21.7"/></g></svg>
<div style="position:absolute;left:1299.20px;top:37.8px;font-size:20px;line-height:20px;font-weight:400;color:#64748b;letter-spacing:1.018px;white-space:nowrap;">Project</div>
<div style="position:absolute;left:1298.20px;top:75px;font-size:32px;line-height:32px;font-weight:400;color:#1c1c1f;letter-spacing:1.073px;white-space:nowrap;">Members</div>
<div style="position:absolute;left:1974.3px;top:44px;width:246.6px;height:64px;border-radius:9px;background:#fff;border:2px solid #7c3aed;box-sizing:border-box;"></div>
<svg style="position:absolute;left:2002px;top:66px;overflow:visible;" width="20" height="20" viewBox="0 0 20 20" fill="none"><g stroke="#7c3aed" stroke-width="1.8" stroke-linecap="round"><line x1="10" y1="0.5" x2="10" y2="19.5"/><line x1="0.5" y1="10" x2="19.5" y2="10"/></g></svg>
<div style="position:absolute;left:2038.40px;top:63.2px;font-size:28px;line-height:28px;font-weight:400;color:#7c3aed;letter-spacing:-0.314px;white-space:nowrap;">Internal User</div>
<div style="position:absolute;left:2253px;top:44px;width:270.3px;height:64px;border-radius:9px;background:#7e45f4;"></div>
<svg style="position:absolute;left:2279px;top:66px;overflow:visible;" width="20" height="20" viewBox="0 0 20 20" fill="none"><g stroke="#fff" stroke-width="1.8" stroke-linecap="round"><line x1="10" y1="0.5" x2="10" y2="19.5"/><line x1="0.5" y1="10" x2="19.5" y2="10"/></g></svg>
<div style="position:absolute;left:2317.30px;top:63.2px;font-size:28px;line-height:28px;font-weight:400;color:#fff;letter-spacing:-0.578px;white-space:nowrap;">Customer User</div>
<div style="position:absolute;left:1171px;top:132px;width:1360px;height:2px;border-radius:0px;background:#e4e5e8;"></div>
<div style="position:absolute;left:1203px;top:166px;width:358.2px;height:63.5px;border-radius:9px;background:#fff;border:2px solid #dcdde1;box-sizing:border-box;"></div>
<div style="position:absolute;left:1205px;top:168px;width:65.3px;height:59.5px;border-radius:0px;background:#e2e3e7;border-top-left-radius:7px;border-bottom-left-radius:7px;"></div>
<div style="position:absolute;left:1400px;top:168px;width:2px;height:59.5px;border-radius:0px;background:#dcdde1;"></div>
<div style="position:absolute;left:1222.00px;top:185.5px;font-size:28px;line-height:28px;font-weight:400;color:#1f1b30;letter-spacing:-0.098px;white-space:nowrap;">All</div>
<div style="position:absolute;left:1286.00px;top:185.5px;font-size:28px;line-height:28px;font-weight:400;color:#87868f;letter-spacing:0.690px;white-space:nowrap;">Internal</div>
<div style="position:absolute;left:1418.50px;top:185.5px;font-size:28px;line-height:28px;font-weight:400;color:#87868f;letter-spacing:0.637px;white-space:nowrap;">Customer</div>
<div style="position:absolute;left:1594.80px;top:186px;font-size:28px;line-height:28px;font-weight:400;color:#1c1c1f;letter-spacing:0.485px;white-space:nowrap;">Sort By:</div>
<div style="position:absolute;left:1729.7px;top:166px;width:237.3px;height:63.5px;border-radius:9px;background:#fff;border:2px solid #dcdde1;box-sizing:border-box;"></div>
<div style="position:absolute;left:1746.40px;top:186px;font-size:28px;line-height:28px;font-weight:400;color:#1c1c1f;letter-spacing:0.501px;white-space:nowrap;">Most Recent</div>
<svg style="position:absolute;left:1929.6px;top:195px;overflow:visible;" width="16" height="9" viewBox="0 0 16 9" fill="none"><path d="M0.3 0.3 H15.3 L7.8 8.6 Z" fill="#a0a5b0"/></svg>
<div style="position:absolute;left:1204px;top:262.5px;width:417.29999999999995px;height:172.5px;border-radius:14px;background:#f3f3f5;border:2px solid #dfe0e3;box-sizing:border-box;"></div>
<div style="position:absolute;left:1230.50px;top:291.3px;font-size:24px;line-height:24px;font-weight:400;color:#6d6b78;letter-spacing:0.901px;white-space:nowrap;">Total Members</div>
<div style="position:absolute;left:1230.29px;top:329.6px;font-size:48px;line-height:48px;font-weight:400;color:#1c1c1f;letter-spacing:0.000px;white-space:nowrap;-webkit-text-stroke:1.58px #1c1c1f;">5</div>
<div style="position:absolute;left:1230.50px;top:387.4px;font-size:22px;line-height:22px;font-weight:400;color:#84838e;letter-spacing:0.475px;white-space:nowrap;">4 Internal · 1 Customer</div>
<div style="position:absolute;left:1647px;top:262.5px;width:416px;height:172.5px;border-radius:14px;background:#f3f3f5;border:2px solid #dfe0e3;box-sizing:border-box;"></div>
<div style="position:absolute;left:1673.50px;top:291.3px;font-size:24px;line-height:24px;font-weight:400;color:#6d6b78;letter-spacing:0.866px;white-space:nowrap;">Total Visits</div>
<div style="position:absolute;left:1673.29px;top:329.6px;font-size:48px;line-height:48px;font-weight:400;color:#1c1c1f;letter-spacing:0.000px;white-space:nowrap;-webkit-text-stroke:1.58px #1c1c1f;">5</div>
<div style="position:absolute;left:1673.50px;top:387.4px;font-size:22px;line-height:22px;font-weight:400;color:#84838e;letter-spacing:0.625px;white-space:nowrap;">5 Internal · 0 Customer</div>
<div style="position:absolute;left:2088.5px;top:262.5px;width:417.8000000000002px;height:172.5px;border-radius:14px;background:#f3f3f5;border:2px solid #dfe0e3;box-sizing:border-box;"></div>
<div style="position:absolute;left:2114.00px;top:291.3px;font-size:24px;line-height:24px;font-weight:400;color:#6d6b78;letter-spacing:0.714px;white-space:nowrap;">Engaged Users</div>
<div style="position:absolute;left:2114.79px;top:329.6px;font-size:48px;line-height:48px;font-weight:400;color:#1c1c1f;letter-spacing:3.665px;white-space:nowrap;-webkit-text-stroke:1.58px #1c1c1f;">40%</div>
<div style="position:absolute;left:2114.00px;top:387.4px;font-size:22px;line-height:22px;font-weight:400;color:#84838e;letter-spacing:0.679px;white-space:nowrap;">2 Internal · 0 Customer</div>
<div style="position:absolute;left:1204px;top:469px;width:1302px;height:404px;border-radius:14px;background:#fff;border:2px solid #e0e1e4;box-sizing:border-box;"></div>
<div style="position:absolute;left:1692.90px;top:504.79999999999995px;font-size:23px;line-height:23px;font-weight:400;color:#6d6b78;letter-spacing:0.562px;white-space:nowrap;">2 of 2 engaged users selected</div>
<svg style="position:absolute;left:0;top:0" width="2569" height="1317" viewBox="0 0 2569 1317"><line x1="1298.4" y1="558.9" x2="2460.3" y2="558.9" stroke="#dde3f1" stroke-width="2"/><line x1="1298.4" y1="618.8" x2="2460.3" y2="618.8" stroke="#dde3f1" stroke-width="2"/><line x1="1298.4" y1="678.8" x2="2460.3" y2="678.8" stroke="#dde3f1" stroke-width="2"/><line x1="1298.4" y1="738.7" x2="2460.3" y2="738.7" stroke="#dde3f1" stroke-width="2"/><line x1="1298.4" y1="799" x2="2462" y2="799" stroke="#5c606b" stroke-width="2"/><line x1="1300" y1="799" x2="1300" y2="809.5" stroke="#5c606b" stroke-width="2"/><line x1="1686" y1="799" x2="1686" y2="809.5" stroke="#5c606b" stroke-width="2"/><line x1="2074.4" y1="799" x2="2074.4" y2="809.5" stroke="#5c606b" stroke-width="2"/><line x1="2461.9" y1="799" x2="2461.9" y2="809.5" stroke="#5c606b" stroke-width="2"/><path d="M1492 679.3 C1621 749.3 1750 799 1879.4 799 L2267 799" stroke="#4a7be9" stroke-width="4" fill="none"/><path d="M1492 799 C1621 639.6 1750 559 1879.4 559 L2267 559" stroke="#eaa33b" stroke-width="4" fill="none"/><circle cx="1492" cy="799" r="4.6" fill="#fff" stroke="#eaa33b" stroke-width="3"/><circle cx="1879.4" cy="559" r="4.6" fill="#fff" stroke="#eaa33b" stroke-width="3"/><circle cx="2267" cy="559" r="4.6" fill="#fff" stroke="#eaa33b" stroke-width="3"/><circle cx="1492" cy="679.3" r="4.6" fill="#fff" stroke="#4a7be9" stroke-width="3"/><circle cx="1879.4" cy="799" r="4.6" fill="#fff" stroke="#4a7be9" stroke-width="3"/><circle cx="2267" cy="799" r="4.6" fill="#fff" stroke="#4a7be9" stroke-width="3"/></svg>
<div style="position:absolute;left:1270.50px;top:548.1999999999999px;font-size:22px;line-height:22px;font-weight:400;color:#5f6470;letter-spacing:0.000px;white-space:nowrap;">2</div>
<div style="position:absolute;left:1252.15px;top:608.0999999999999px;font-size:22px;line-height:22px;font-weight:400;color:#5f6470;letter-spacing:0.000px;white-space:nowrap;">1.5</div>
<div style="position:absolute;left:1270.50px;top:668.0999999999999px;font-size:22px;line-height:22px;font-weight:400;color:#5f6470;letter-spacing:0.000px;white-space:nowrap;">1</div>
<div style="position:absolute;left:1252.15px;top:728.0px;font-size:22px;line-height:22px;font-weight:400;color:#5f6470;letter-spacing:0.000px;white-space:nowrap;">0.5</div>
<div style="position:absolute;left:1270.50px;top:788.0999999999999px;font-size:22px;line-height:22px;font-weight:400;color:#5f6470;letter-spacing:0.000px;white-space:nowrap;">0</div>
<div style="position:absolute;left:1462.50px;top:816.7px;font-size:22px;line-height:22px;font-weight:400;color:#5f6470;letter-spacing:1.045px;white-space:nowrap;">03/15</div>
<div style="position:absolute;left:1849.70px;top:816.7px;font-size:22px;line-height:22px;font-weight:400;color:#5f6470;letter-spacing:1.045px;white-space:nowrap;">03/16</div>
<div style="position:absolute;left:2237.20px;top:816.7px;font-size:22px;line-height:22px;font-weight:400;color:#5f6470;letter-spacing:1.045px;white-space:nowrap;">03/17</div>
<div style="position:absolute;left:1204px;top:906.5px;width:738.3px;height:393px;border-radius:14px;background:#fff;border:2px solid #e3e4e7;box-sizing:border-box;"></div>
<div style="position:absolute;left:1229px;top:932px;width:48px;height:48px;border-radius:9px;background:#e5e6e9;"></div>
<div style="position:absolute;left:1235.40px;top:945.2px;font-size:24px;line-height:24px;font-weight:400;color:#27272a;letter-spacing:-0.400px;white-space:nowrap;">JW</div>
<div style="position:absolute;left:1298.44px;top:937.7px;font-size:27px;line-height:27px;font-weight:400;color:#1c1c1f;letter-spacing:1.126px;white-space:nowrap;-webkit-text-stroke:0.89px #1c1c1f;">Jen Weaver</div>
<div style="position:absolute;left:1299.00px;top:970.9px;font-size:22px;line-height:22px;font-weight:400;color:#7b7b7f;letter-spacing:0.322px;white-space:nowrap;">jen@onramp.us</div>
<div style="position:absolute;left:1475.5px;top:980.5px;width:3px;height:3px;border-radius:2px;background:#7b7b7f;"></div>
<div style="position:absolute;left:1488.00px;top:970.9px;font-size:22px;line-height:22px;font-weight:400;color:#7b7b7f;letter-spacing:0.341px;white-space:nowrap;">OnRamp</div>
<div style="position:absolute;left:1806px;top:932.2px;width:111px;height:35.6px;border-radius:18px;background:#e4e5e8;"></div>
<div style="position:absolute;left:1823.60px;top:940.4px;font-size:20px;line-height:20px;font-weight:400;color:#27272a;letter-spacing:1.133px;white-space:nowrap;">Internal</div>
<svg style="position:absolute;left:1282px;top:1010px;overflow:visible;" width="32" height="32" viewBox="0 0 32 32" fill="none"><circle cx="16" cy="16" r="15.8" fill="#76c47e"/><polyline points="9.5,16 14,20.3 22.6,11.8" stroke="#fff" stroke-width="1.8" fill="none" stroke-linecap="round" stroke-linejoin="round"/></svg>
<div style="position:absolute;left:1252.02px;top:1051.8px;font-size:16px;line-height:16px;font-weight:400;color:#62bd71;letter-spacing:0.643px;white-space:nowrap;-webkit-text-stroke:0.53px #62bd71;">ACCESSED</div>
<div style="position:absolute;left:1229px;top:1088px;width:688px;height:2px;border-radius:0px;background:#e8e9eb;"></div>
<div style="position:absolute;left:1283.00px;top:1112px;font-size:18px;line-height:18px;font-weight:400;color:#858585;letter-spacing:1.553px;white-space:nowrap;-webkit-text-stroke:0.59px #858585;">LAST VISIT</div>
<div style="position:absolute;left:1231.76px;top:1137px;font-size:25px;line-height:25px;font-weight:400;color:#262626;letter-spacing:0.676px;white-space:nowrap;-webkit-text-stroke:0.83px #262626;">about 3 hours ago</div>
<div style="position:absolute;left:1284.95px;top:1165px;font-size:18px;line-height:18px;font-weight:400;color:#8e8e93;letter-spacing:0.928px;white-space:nowrap;">4 total visits</div>
<div style="position:absolute;left:1505.05px;top:1112px;font-size:18px;line-height:18px;font-weight:400;color:#858585;letter-spacing:1.789px;white-space:nowrap;-webkit-text-stroke:0.59px #858585;">LAST ACTION</div>
<div style="position:absolute;left:1537.37px;top:1137px;font-size:25px;line-height:25px;font-weight:400;color:#262626;letter-spacing:0.727px;white-space:nowrap;-webkit-text-stroke:0.83px #262626;">Never</div>
<div style="position:absolute;left:1775.85px;top:1112px;font-size:18px;line-height:18px;font-weight:400;color:#858585;letter-spacing:1.408px;white-space:nowrap;-webkit-text-stroke:0.59px #858585;">TASKS</div>
<div style="position:absolute;left:1719.26px;top:1137px;font-size:25px;line-height:25px;font-weight:400;color:#262626;letter-spacing:0.716px;white-space:nowrap;-webkit-text-stroke:0.83px #262626;">None assigned</div>
<div style="position:absolute;left:1229px;top:1203.5px;width:688px;height:2px;border-radius:0px;background:#e8e9eb;"></div>
<div style="position:absolute;left:1229.5px;top:1226.5px;width:47px;height:47px;border-radius:8px;background:#fff;border:2px solid #a3a5ae;box-sizing:border-box;"></div>
<div style="position:absolute;left:1285.5px;top:1226.5px;width:47px;height:47px;border-radius:8px;background:#fff;border:2px solid #a3a5ae;box-sizing:border-box;"></div>
<div style="position:absolute;left:1341.5px;top:1226.5px;width:47px;height:47px;border-radius:8px;background:#fff;border:2px solid #a3a5ae;box-sizing:border-box;"></div>
<svg style="position:absolute;left:1240.5px;top:1240.5px;overflow:visible;" width="26" height="20" viewBox="0 0 26 20" fill="none"><rect x="1.2" y="1.2" width="22.7" height="16.6" rx="3" stroke="#2f3b57" stroke-width="2.2"/><polyline points="2,5 12.5,13 23,5" stroke="#2f3b57" stroke-width="2.2" fill="none" stroke-linejoin="round"/></svg>
<svg style="position:absolute;left:1297.0px;top:1236px;overflow:visible;" width="24" height="28" viewBox="0 0 24 28" fill="none"><circle cx="12" cy="7.8" r="5.7" stroke="#2f3b57" stroke-width="1.6"/><path d="M1.8 25.4 Q2.5 16.8 12 16.8 Q21.5 16.8 22.3 25.4 Z" stroke="#2f3b57" stroke-width="1.6" fill="none" stroke-linejoin="round"/></svg>
<svg style="position:absolute;left:1353.0px;top:1236px;overflow:visible;" width="24" height="28" viewBox="0 0 24 28" fill="none"><g stroke="#2f3b57" stroke-width="2" fill="none" stroke-linejoin="round" stroke-linecap="round"><line x1="1.7" y1="6.8" x2="22.2" y2="6.8"/><path d="M7.7 6.8 L9.5 3 H14.5 L16.3 6.8"/><path d="M3.5 7 L5.6 23.5 Q6 25.2 7.8 25.2 H16.2 Q18 25.2 18.4 23.5 L20.5 7"/></g></svg>
<div style="position:absolute;left:1784.00px;top:1240.7px;font-size:21px;line-height:21px;font-weight:400;color:#8d8d93;letter-spacing:0.429px;white-space:nowrap;">On chart</div>
<div style="position:absolute;left:1881.3px;top:1232px;width:36px;height:36px;border-radius:7px;background:#eba43b;"></div>
<svg style="position:absolute;left:1881.3px;top:1232px;overflow:visible;" width="36" height="36" viewBox="0 0 36 36" fill="none"><polyline points="11,18.5 16,23 25,13.5" stroke="#fff" stroke-width="2" fill="none" stroke-linecap="round" stroke-linejoin="round"/></svg>
<div style="position:absolute;left:0;top:0;width:2539px;height:1317px;overflow:hidden">
<div style="position:absolute;left:1975.7px;top:906.5px;width:800px;height:393px;border-radius:14px;background:#fff;border:2px solid #e3e4e7;box-sizing:border-box;"></div>
<svg style="position:absolute;left:2003.9px;top:934px;overflow:visible;" width="43.3" height="43.3" viewBox="0 0 43.3 43.3" fill="none"><defs><clipPath id="avR"><circle cx="21.65" cy="21.65" r="21.65"/></clipPath></defs><g transform="scale(1.0)" clip-path="url(#avR)"><rect width="44" height="44" fill="#d7ebfa"/><path d="M5 44 Q6 30 16 27 L22.2 31.5 L28 27 Q38 30 39 44 Z" fill="#6b7862"/><path d="M19.4 23.5 L25.3 23.5 L25.3 27 L22.2 31.6 L19.4 27 Z" fill="#d4a676"/><ellipse cx="14.3" cy="16.3" rx="1.3" ry="2" fill="#d9ad7c"/><ellipse cx="29.8" cy="16.3" rx="1.3" ry="2" fill="#d9ad7c"/><path d="M14.4 12 Q14.2 7.5 22 7.5 Q29.8 7.5 29.6 12 L29.6 17 Q29.3 22 26.5 24 Q22.2 26.6 17.8 24 Q14.8 22 14.4 17 Z" fill="#ddb17f"/><path d="M13.4 15.5 Q12.6 6 17 4 Q20 2.3 23 3 Q28 2.5 30 5 Q31.6 8 30.6 15.5 L29.6 11.5 Q29 8.6 26 8.4 Q22 9.3 17.5 8.4 Q14.9 8.8 14.4 11.5 Z" fill="#4b3627"/><circle cx="18.3" cy="15.8" r="1" fill="#9ea6a4"/><circle cx="25.6" cy="15.8" r="1" fill="#9ea6a4"/><path d="M19.3 20.8 Q22.1 22.1 24.8 20.8 Q24.2 23.7 22.1 23.7 Q20 23.7 19.3 20.8 Z" fill="#ffffff"/></g></svg>
<div style="position:absolute;left:2068.14px;top:937.7px;font-size:27px;line-height:27px;font-weight:400;color:#1c1c1f;letter-spacing:1.466px;white-space:nowrap;-webkit-text-stroke:0.89px #1c1c1f;">Bryan Esslinger</div>
<div style="position:absolute;left:2068.70px;top:970.9px;font-size:22px;line-height:22px;font-weight:400;color:#7b7b7f;letter-spacing:0.621px;white-space:nowrap;">bryan@onramp.us</div>
<div style="position:absolute;left:2275.5px;top:980.5px;width:3px;height:3px;border-radius:2px;background:#7b7b7f;"></div>
<div style="position:absolute;left:2287.60px;top:970.9px;font-size:22px;line-height:22px;font-weight:400;color:#7b7b7f;letter-spacing:0.461px;white-space:nowrap;">OnRamp</div>
<div style="position:absolute;left:2465.3px;top:932.2px;width:111px;height:35.6px;border-radius:18px;background:#e4e5e8;"></div>
<div style="position:absolute;left:2482.90px;top:940.4px;font-size:20px;line-height:20px;font-weight:400;color:#27272a;letter-spacing:1.133px;white-space:nowrap;">Internal</div>
<svg style="position:absolute;left:2043px;top:1010px;overflow:visible;" width="32" height="32" viewBox="0 0 32 32" fill="none"><circle cx="16" cy="16" r="15.8" fill="#76c47e"/><polyline points="9.5,16 14,20.3 22.6,11.8" stroke="#fff" stroke-width="1.8" fill="none" stroke-linecap="round" stroke-linejoin="round"/></svg>
<div style="position:absolute;left:2013.02px;top:1051.8px;font-size:16px;line-height:16px;font-weight:400;color:#62bd71;letter-spacing:0.643px;white-space:nowrap;-webkit-text-stroke:0.53px #62bd71;">ACCESSED</div>
<div style="position:absolute;left:2001px;top:1088px;width:700px;height:2px;border-radius:0px;background:#e8e9eb;"></div>
<div style="position:absolute;left:2035.60px;top:1112px;font-size:18px;line-height:18px;font-weight:400;color:#858585;letter-spacing:1.731px;white-space:nowrap;-webkit-text-stroke:0.59px #858585;">LAST VISIT</div>
<div style="position:absolute;left:2028.32px;top:1137px;font-size:25px;line-height:25px;font-weight:400;color:#262626;letter-spacing:0.418px;white-space:nowrap;-webkit-text-stroke:0.83px #262626;">2 days ago</div>
<div style="position:absolute;left:2038.70px;top:1165px;font-size:18px;line-height:18px;font-weight:400;color:#8e8e93;letter-spacing:0.797px;white-space:nowrap;">1 total visits</div>
<div style="position:absolute;left:2220.35px;top:1112px;font-size:18px;line-height:18px;font-weight:400;color:#858585;letter-spacing:1.809px;white-space:nowrap;-webkit-text-stroke:0.59px #858585;">LAST ACTION</div>
<div style="position:absolute;left:2252.76px;top:1137px;font-size:25px;line-height:25px;font-weight:400;color:#262626;letter-spacing:0.727px;white-space:nowrap;-webkit-text-stroke:0.83px #262626;">Never</div>
<div style="position:absolute;left:2454.39px;top:1112px;font-size:18px;line-height:18px;font-weight:400;color:#858585;letter-spacing:1.183px;white-space:nowrap;-webkit-text-stroke:0.59px #858585;">TASKS</div>
<div style="position:absolute;left:2454.61px;top:1137px;font-size:25px;line-height:25px;font-weight:400;color:#262626;letter-spacing:0.065px;white-space:nowrap;-webkit-text-stroke:0.83px #262626;">0 of 1</div>
<div style="position:absolute;left:2440.10px;top:1165px;font-size:18px;line-height:18px;font-weight:400;color:#8e8e93;letter-spacing:1.120px;white-space:nowrap;">completed</div>
<div style="position:absolute;left:2001px;top:1203.5px;width:700px;height:2px;border-radius:0px;background:#e8e9eb;"></div>
<div style="position:absolute;left:2001.6px;top:1226.5px;width:47px;height:47px;border-radius:8px;background:#fff;border:2px solid #a3a5ae;box-sizing:border-box;"></div>
<div style="position:absolute;left:2057.6px;top:1226.5px;width:47px;height:47px;border-radius:8px;background:#fff;border:2px solid #a3a5ae;box-sizing:border-box;"></div>
<div style="position:absolute;left:2113.6px;top:1226.5px;width:47px;height:47px;border-radius:8px;background:#fff;border:2px solid #a3a5ae;box-sizing:border-box;"></div>
<svg style="position:absolute;left:2012.6px;top:1240.5px;overflow:visible;" width="26" height="20" viewBox="0 0 26 20" fill="none"><rect x="1.2" y="1.2" width="22.7" height="16.6" rx="3" stroke="#2f3b57" stroke-width="2.2"/><polyline points="2,5 12.5,13 23,5" stroke="#2f3b57" stroke-width="2.2" fill="none" stroke-linejoin="round"/></svg>
<svg style="position:absolute;left:2069.1px;top:1236px;overflow:visible;" width="24" height="28" viewBox="0 0 24 28" fill="none"><circle cx="12" cy="7.8" r="5.7" stroke="#2f3b57" stroke-width="1.6"/><path d="M1.8 25.4 Q2.5 16.8 12 16.8 Q21.5 16.8 22.3 25.4 Z" stroke="#2f3b57" stroke-width="1.6" fill="none" stroke-linejoin="round"/></svg>
<svg style="position:absolute;left:2125.1px;top:1236px;overflow:visible;" width="24" height="28" viewBox="0 0 24 28" fill="none"><g stroke="#2f3b57" stroke-width="2" fill="none" stroke-linejoin="round" stroke-linecap="round"><line x1="1.7" y1="6.8" x2="22.2" y2="6.8"/><path d="M7.7 6.8 L9.5 3 H14.5 L16.3 6.8"/><path d="M3.5 7 L5.6 23.5 Q6 25.2 7.8 25.2 H16.2 Q18 25.2 18.4 23.5 L20.5 7"/></g></svg>
<div style="position:absolute;left:2443.20px;top:1240.7px;font-size:21px;line-height:21px;font-weight:400;color:#8d8d93;letter-spacing:0.514px;white-space:nowrap;">On chart</div>
</div>
<div style="position:absolute;left:2531px;top:900px;width:38px;height:300px;border-radius:0px;background:#fff;"></div>
</div>
</body></html>
